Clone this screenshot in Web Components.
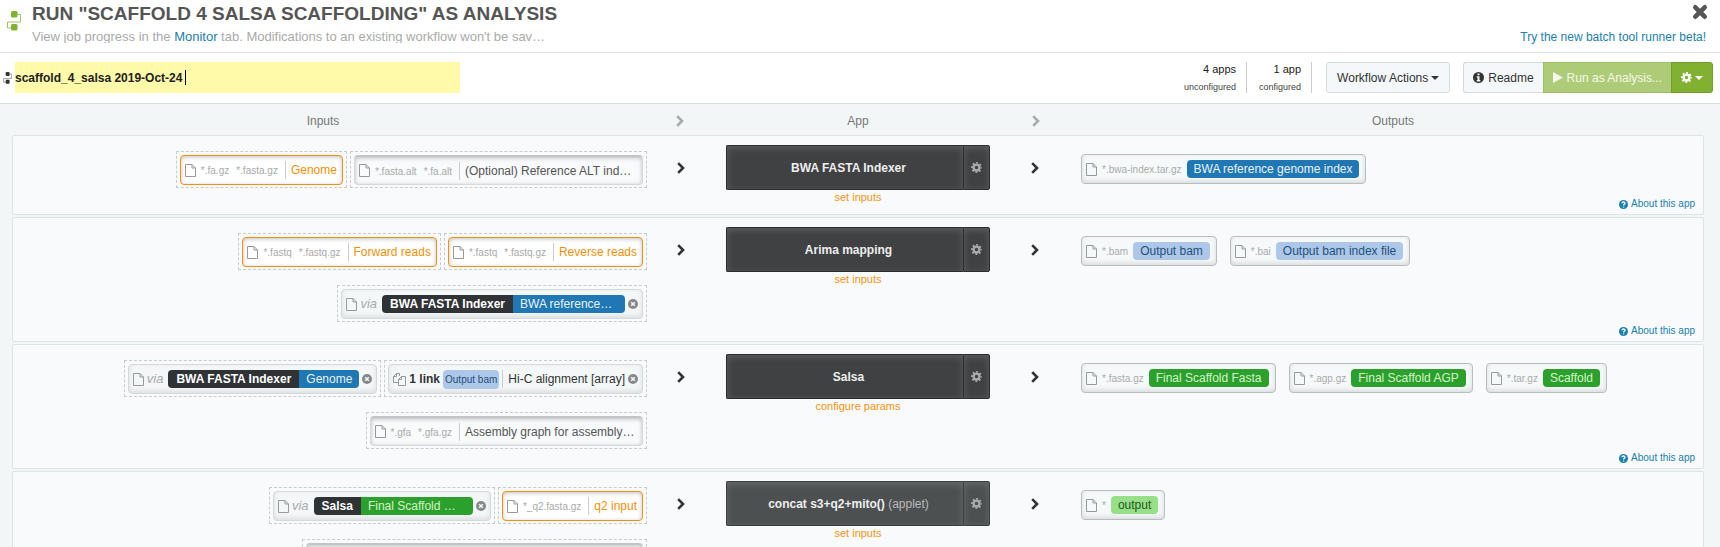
<!DOCTYPE html>
<html lang="en">
<head>
<meta charset="utf-8">
<meta name="viewport" content="width=device-width, initial-scale=1">
<title>Run as Analysis</title>
<style>
  html, body { height: 100%; margin: 0; }
  body { font: 12px/18px "Liberation Sans", Arial, sans-serif; color: #333; background: #fff; overflow: hidden; }
</style>
</head>
<body>
<analysis-page>
  <run-header slot="header" heading='RUN "SCAFFOLD 4 SALSA SCAFFOLDING" AS ANALYSIS'>
    View job progress in the <a href="#monitor">Monitor</a> tab. Modifications to an existing workflow won't be sav…
  </run-header>
  <run-toolbar slot="toolbar"></run-toolbar>

  <app-stage name="BWA FASTA Indexer" status="set inputs">
    <file-input slot="inputs" state="required" patterns="*.fa.gz *.fasta.gz">Genome</file-input>
    <file-input slot="inputs" state="optional" patterns="*.fasta.alt *.fa.alt" cut>(Optional) Reference ALT ind…</file-input>
    <file-output slot="outputs" pattern="*.bwa-index.tar.gz" tone="blue">BWA reference genome index</file-output>
  </app-stage>

  <app-stage name="Arima mapping" status="set inputs">
    <file-input slot="inputs" state="required" patterns="*.fastq *.fastq.gz">Forward reads</file-input>
    <file-input slot="inputs" state="required" patterns="*.fastq *.fastq.gz">Reverse reads</file-input>
    <linked-input slot="inputs" source="BWA FASTA Indexer" tone="blue" cut>BWA reference…</linked-input>
    <file-output slot="outputs" pattern="*.bam" tone="sky">Output bam</file-output>
    <file-output slot="outputs" pattern="*.bai" tone="sky">Output bam index file</file-output>
  </app-stage>

  <app-stage name="Salsa" status="configure params">
    <linked-input slot="inputs" source="BWA FASTA Indexer" tone="blue">Genome</linked-input>
    <array-input slot="inputs" count="1 link" link="Output bam">Hi-C alignment [array]</array-input>
    <file-input slot="inputs" state="optional" patterns="*.gfa *.gfa.gz" cut>Assembly graph for assembly…</file-input>
    <file-output slot="outputs" pattern="*.fasta.gz" tone="green">Final Scaffold Fasta</file-output>
    <file-output slot="outputs" pattern="*.agp.gz" tone="green">Final Scaffold AGP</file-output>
    <file-output slot="outputs" pattern="*.tar.gz" tone="green">Scaffold</file-output>
  </app-stage>

  <app-stage name="concat s3+q2+mito()" kind="(applet)" status="set inputs">
    <linked-input slot="inputs" source="Salsa" tone="green" cut>Final Scaffold …</linked-input>
    <file-input slot="inputs" state="required" patterns="*_q2.fasta.gz">q2 input</file-input>
    <file-input slot="inputs" state="optional" wide></file-input>
    <file-output slot="outputs" pattern="*" tone="lime">output</file-output>
  </app-stage>
</analysis-page>

<script>
const ICONS = {
  workflow: ['0 0 14 20', '<path d="M10 3.500h3.500v7.500h-13v6h4" fill="none" stroke="currentColor" stroke-opacity=".75"/><rect x="4" y="0" width="6.500" height="6.500" rx="1.500" fill="currentColor"/><rect x="4" y="13" width="6.500" height="6.500" rx="1.500" fill="currentColor"/>'],
  file: ['0 0 11 13', '<path d="M.5.5h6.500l3.500 3.500v8.500H.5zM7 .5V4h3.500" fill="none" stroke="currentColor"/>'],
  files: ['0 0 13 13', '<path d="M6.500 3V.5H3.500L.5 3.500v6H5M3.500.5v3h-3M8 3.500h4.500v9H5.500V6.500L8.500 3.500v3h-3" fill="none" stroke="currentColor"/>'],
  close: ['0 0 16 16', '<path d="M3.300 3.300l9.400 9.400M12.700 3.300l-9.400 9.400" fill="none" stroke="currentColor" stroke-width="4.600" stroke-linecap="round"/>'],
  chevron: ['0 0 8 12', '<path d="M1.200 1.200L6 6l-4.800 4.800" fill="none" stroke="currentColor" stroke-width="2.600"/>'],
  caret: ['0 0 8 4', '<path d="M0 0h8L4 4z" fill="currentColor"/>'],
  play: ['0 0 10 11', '<path d="M0 0l10 5.500L0 11z" fill="currentColor"/>'],
  info: ['0 0 11 11', '<circle cx="5.500" cy="5.500" r="5.500" fill="currentColor"/><path d="M4.500 1.500h2v1.700h-2zM3.700 4.200h2.800v3.900h.8v1.400H3.700V8.100h.8V5.600h-.8z" fill="#f4f8fa"/>'],
  help: ['0 0 9 9', '<circle cx="4.500" cy="4.500" r="4.500" fill="currentColor"/><path d="M3 3.300c.1-1.800 3.200-1.700 3 .1-.1 1-1.400.9-1.400 2.100M4.600 6.400v1.200" fill="none" stroke="#f8fafc" stroke-width="1.300"/>'],
  remove: ['0 0 10 10', '<circle cx="5" cy="5" r="5" fill="currentColor"/><path d="M3.200 3.200l3.600 3.600M6.800 3.200L3.200 6.800" stroke="#f4f7f8" stroke-width="1.600"/>'],
  gear: ['0 0 12 12', '<circle cx="6" cy="6" r="3.200" fill="none" stroke="currentColor" stroke-width="2.600"/><circle cx="6" cy="6" r="5" fill="none" stroke="currentColor" stroke-width="2" stroke-dasharray="1.964 1.963" stroke-dashoffset=".98"/>']
};
const TONES = `
  .blue { background: #1f77b4; color: #e8f3fb; }
  .sky { background: #aec7e8; color: #1d5279; }
  .green { background: #2ca02c; color: #d5f5c8; }
  .lime { background: #98df8a; color: #1c5a1c; }
`;
const FRAME = `
  :host { display: block; box-sizing: border-box; border: 1px dashed #c6cccf; padding: 3px 3px 2px; }
  .box { display: flex; align-items: center; box-sizing: border-box; height: 30px; padding: 0 4px; border: 1px solid #d5d9db; border-radius: 4px; white-space: nowrap; }
`;

class Base extends HTMLElement {
  connectedCallback() {
    if (this.shadowRoot) return;
    this.attachShadow({ mode: 'open' }).innerHTML = this.render();
  }
  attr(name) {
    return (this.getAttribute(name) || '').replace(/&/g, '&amp;').replace(/</g, '&lt;').replace(/"/g, '&quot;');
  }
}

customElements.define('ui-icon', class extends Base {
  render() {
    const [box, art] = ICONS[this.getAttribute('name')];
    return `<style>:host { display: inline-block; flex: none; line-height: 0; } svg { display: block; width: 100%; height: 100%; }</style>
      <svg viewBox="${box}" aria-hidden="true">${art}</svg>`;
  }
});

customElements.define('analysis-page', class extends Base {
  render() {
    return `<style>
      :host { display: flex; flex-direction: column; height: 100vh; }
      main { flex: 1; min-height: 0; overflow: auto; scrollbar-width: none; background: #f2f6f7; padding: 0 16px 0 12px; }
      .head { display: grid; grid-template-columns: 1fr 92px 264px 92px 1fr; place-items: center; box-sizing: border-box; height: 31px; padding-top: 2px; color: #777; }
      .head ui-icon { width: 8px; height: 12px; color: #aaa; }
      .list { display: flex; flex-direction: column; gap: 2px; }
    </style>
    <slot name="header"></slot><slot name="toolbar"></slot>
    <main>
      <div class="head"><span>Inputs</span><ui-icon name="chevron"></ui-icon><span>App</span><ui-icon name="chevron"></ui-icon><span>Outputs</span></div>
      <div class="list"><slot></slot></div>
    </main>`;
  }
});

customElements.define('run-header', class extends Base {
  render() {
    return `<style>
      :host { display: flex; box-sizing: border-box; height: 53px; padding: 0 12px 0 7px; border-bottom: 1px solid #ddd; }
      .logo { width: 14px; height: 20px; margin: 11px 11px 0 0; color: #82b030; }
      .text { flex: 1; min-width: 0; }
      h1 { margin: 4px 0 3px; font-size: 19px; line-height: 20px; color: #555; }
      p { margin: 0; height: 16px; font-size: 13px; line-height: 20px; overflow: hidden; color: #aaa; white-space: nowrap; }
      ::slotted(a), a { color: #1b80ae; text-decoration: none; }
      .side { display: flex; flex-direction: column; align-items: flex-end; }
      .side a { padding-right: 2px; }
      button { margin: 4px 0 8px; padding: 0; border: 0; background: none; color: #555; }
      button ui-icon { display: block; width: 16px; height: 16px; }
    </style>
    <ui-icon class="logo" name="workflow"></ui-icon>
    <div class="text"><h1>${this.attr('heading')}</h1><p><slot></slot></p></div>
    <div class="side"><button aria-label="Close"><ui-icon name="close"></ui-icon></button><a href="#beta">Try the new batch tool runner beta!</a></div>`;
  }
});

customElements.define('run-toolbar', class extends Base {
  render() {
    return `<style>
      :host { display: flex; align-items: center; box-sizing: border-box; height: 51px; padding: 0 7px 1px 3px; border-bottom: 1px solid #ddd; }
      .mark { width: 9px; height: 12px; color: #333; }
      .name { position: relative; width: 26%; margin: 0 auto 0 3px; }
      input { display: block; box-sizing: border-box; width: 100%; height: 31px; padding: 0; border: 0; background: #fffaaa; color: #222; font: bold 12px "Liberation Sans", Arial, sans-serif; outline: 0; }
      .cursor { position: absolute; left: 170px; top: 8px; width: 1px; height: 15px; background: #000; }
      dl { display: flex; flex-direction: column; justify-content: space-between; box-sizing: border-box; height: 31px; margin: 0; padding-right: 10px; border-right: 1px solid #ccc; text-align: right; }
      dl + dl { padding-left: 12px; }
      dt { font-size: 11px; line-height: 14px; color: #222; }
      dd { margin: 0; font-size: 9px; line-height: 12px; color: #444; }
      button { display: flex; align-items: center; gap: 4px; box-sizing: border-box; height: 31px; padding: 0 9px; border: 1px solid #d5dadb; background: #f4f8fa; color: #333; font: inherit; white-space: nowrap; }
      .actions { gap: 3px; padding: 0 10px; margin: 0 13px 0 14px; border-radius: 3px; }
      .readme { border-right: 0; border-radius: 3px 0 0 3px; }
      .run { border-color: #9cbf66; background: #aecb77; color: #f4f9ea; }
      .more { gap: 3px; border-color: #739d2a; background: #82b030; color: #fff; border-radius: 0 3px 3px 0; margin-left: -1px; }
      .caret { width: 8px; height: 4px; } .info, .gear { width: 11px; height: 11px; } .play { width: 10px; height: 11px; }
    </style>
    <ui-icon class="mark" name="workflow"></ui-icon>
    <div class="name"><input aria-label="Analysis name" value="scaffold_4_salsa 2019-Oct-24"><span class="cursor"></span></div>
    <dl><dt>4 apps</dt><dd>unconfigured</dd></dl>
    <dl><dt>1 app</dt><dd>configured</dd></dl>
    <button class="actions">Workflow Actions<ui-icon class="caret" name="caret"></ui-icon></button>
    <button class="readme"><ui-icon class="info" name="info"></ui-icon>Readme</button>
    <button class="run"><ui-icon class="play" name="play"></ui-icon>Run as Analysis...</button>
    <button class="more" aria-label="Run options"><ui-icon class="gear" name="gear"></ui-icon><ui-icon class="caret" name="caret"></ui-icon></button>`;
  }
});

customElements.define('app-stage', class extends Base {
  render() {
    const kind = this.attr('kind');
    return `<style>
      :host { display: grid; grid-template-columns: minmax(0, 1fr) 79px 264px 91px minmax(0, 1fr); box-sizing: border-box; min-height: 80px; padding-left: 12px; border: 1px solid #dde4e6; border-radius: 2px; background: #f8fafc; }
      .inputs { display: flex; flex-wrap: wrap; align-content: flex-start; justify-content: flex-end; gap: 15px 3px; padding: 15px 0 19px; }
      .arrow { display: flex; justify-content: center; padding: 26px 2px 0 0; color: #333; }
      .arrow.in { padding-right: 11px; }
      .arrow ui-icon { width: 8px; height: 12px; }
      .app { padding-top: 9px; text-align: center; }
      .bar { display: flex; height: 45px; }
      button { box-sizing: border-box; padding: 0; font: inherit; border: 1px solid #2c2d31; background: #3f4143; color: #eee; box-shadow: inset 0 2px 7px rgba(255, 255, 255, .16); }
      .main { flex: 1; padding-left: 7px; border-radius: 2px 0 0 2px; border-right: 0; }
      .cog { display: flex; align-items: center; justify-content: center; width: 27px; border-radius: 0 2px 2px 0; color: #aaa; }
      .cog ui-icon { width: 11px; height: 11px; }
      .applet button { background: #4c5051; border-color: #3c3e40; }
      .main span { color: #bbb; }
      small { display: block; font-size: 11px; line-height: 15px; color: #f79413; }
      .side { display: flex; flex-direction: column; justify-content: space-between; padding-top: 18px; }
      .outputs { display: flex; flex-wrap: wrap; gap: 13px; }
      .about { display: flex; align-items: center; align-self: flex-end; gap: 3px; padding: 0 8px 4px 0; font-size: 10px; line-height: 12px; color: #1b80ae; text-decoration: none; }
      .about ui-icon { width: 9px; height: 9px; }
    </style>
    <div class="inputs"><slot name="inputs"></slot></div>
    <div class="arrow in"><ui-icon name="chevron"></ui-icon></div>
    <div class="app">
      <div class="bar${kind ? ' applet' : ''}"><button class="main"><b>${this.attr('name')}</b>${kind ? ` <span>${kind}</span>` : ''}</button><button class="cog" aria-label="Configure"><ui-icon name="gear"></ui-icon></button></div>
      <small>${this.attr('status')}</small>
    </div>
    <div class="arrow"><ui-icon name="chevron"></ui-icon></div>
    <div class="side">
      <div class="outputs"><slot name="outputs"></slot></div>
      ${kind ? '' : '<a class="about" href="#about"><ui-icon name="help"></ui-icon>About this app</a>'}
    </div>`;
  }
});

customElements.define('file-input', class extends Base {
  render() {
    const pats = this.attr('patterns').split(' ').filter(Boolean).map(p => `<i>${p}</i>`).join('');
    return `<style>${FRAME}
      .box { background: #f8fafc; color: #555; box-shadow: inset 0 1px 4px rgba(0, 0, 0, .25); }
      :host([state="required"]) .box { background: #fff; border-color: #f78f08; color: #f78f08; }
      :host([state="optional"]) .box { border-color: #d5d9db; border-top: 2px solid #c2c5c6; }
      :host([wide]) { width: 345px; }
      .file { width: 11px; height: 13px; margin-right: 5px; color: #999; }
      .pats { display: flex; gap: 7px; padding: 2px 7px 0 0; color: #aaa; font-size: 10px; }
      i { font-style: normal; }
      .label { padding-left: 5px; border-left: 1px solid #ccc; }
      :host([state="required"]) .label { padding-right: 1px; }
      :host([cut]) .label { min-width: 173px; }
    </style>
    <div class="box"><ui-icon class="file" name="file"></ui-icon>${pats ? `<span class="pats">${pats}</span><span class="label"><slot></slot></span>` : ''}</div>`;
  }
});

customElements.define('linked-input', class extends Base {
  render() {
    return `<style>${FRAME}${TONES}
      .box { background: #f4f7f8; box-shadow: inset 0 -2px 5px rgba(0, 0, 0, .1); }
      .file { width: 11px; height: 13px; color: #999; }
      em { margin: 0 5px 0 3px; font-size: 13px; color: #aaa; }
      b, .port { line-height: 18px; padding: 0 7px; }
      b { padding: 0 8px; border-radius: 4px 0 0 4px; background: #303335; color: #fff; }
      .port { border-radius: 0 4px 4px 0; }
      :host([cut]) .port { min-width: 98px; }
      button { margin-left: 3px; padding: 0; border: 0; background: none; color: #888; }
      button ui-icon { display: block; width: 10px; height: 10px; }
    </style>
    <div class="box"><ui-icon class="file" name="file"></ui-icon><em>via</em><b>${this.attr('source')}</b><span class="port ${this.attr('tone')}"><slot></slot></span><button aria-label="Remove link"><ui-icon name="remove"></ui-icon></button></div>`;
  }
});

customElements.define('array-input', class extends Base {
  render() {
    return `<style>${FRAME}${TONES}
      .box { background: #f4f7f8; box-shadow: inset 0 -2px 5px rgba(0, 0, 0, .1); }
      .files { width: 13px; height: 13px; color: #999; }
      b { margin: 0 3px; }
      .chip { padding: 0 2px; border-radius: 4px; font-size: 10px; line-height: 19px; }
      .label { margin-left: 3px; padding-left: 5px; border-left: 1px solid #ccc; }
      button { margin-left: 3px; padding: 0; border: 0; background: none; color: #888; }
      button ui-icon { display: block; width: 10px; height: 10px; }
    </style>
    <div class="box"><ui-icon class="files" name="files"></ui-icon><b>${this.attr('count')}</b><span class="chip sky">${this.attr('link')}</span><span class="label"><slot></slot></span><button aria-label="Remove link"><ui-icon name="remove"></ui-icon></button></div>`;
  }
});

customElements.define('file-output', class extends Base {
  render() {
    return `<style>${TONES}
      :host { display: flex; align-items: center; box-sizing: border-box; height: 30px; padding: 0 6px 0 4px; border: 1px solid #b9bdbf; border-radius: 4px; background: #f6f9fa; box-shadow: inset 0 -2px 5px rgba(0, 0, 0, .12); white-space: nowrap; }
      .file { width: 11px; height: 13px; color: #999; }
      .pat { margin: 0 5px; padding-top: 2px; color: #aaa; font-size: 10px; }
      .port { padding: 0 7px; border-radius: 4px; line-height: 18px; }
    </style>
    <ui-icon class="file" name="file"></ui-icon><span class="pat">${this.attr('pattern')}</span><span class="port ${this.attr('tone')}"><slot></slot></span>`;
  }
});
</script>
</body>
</html>
